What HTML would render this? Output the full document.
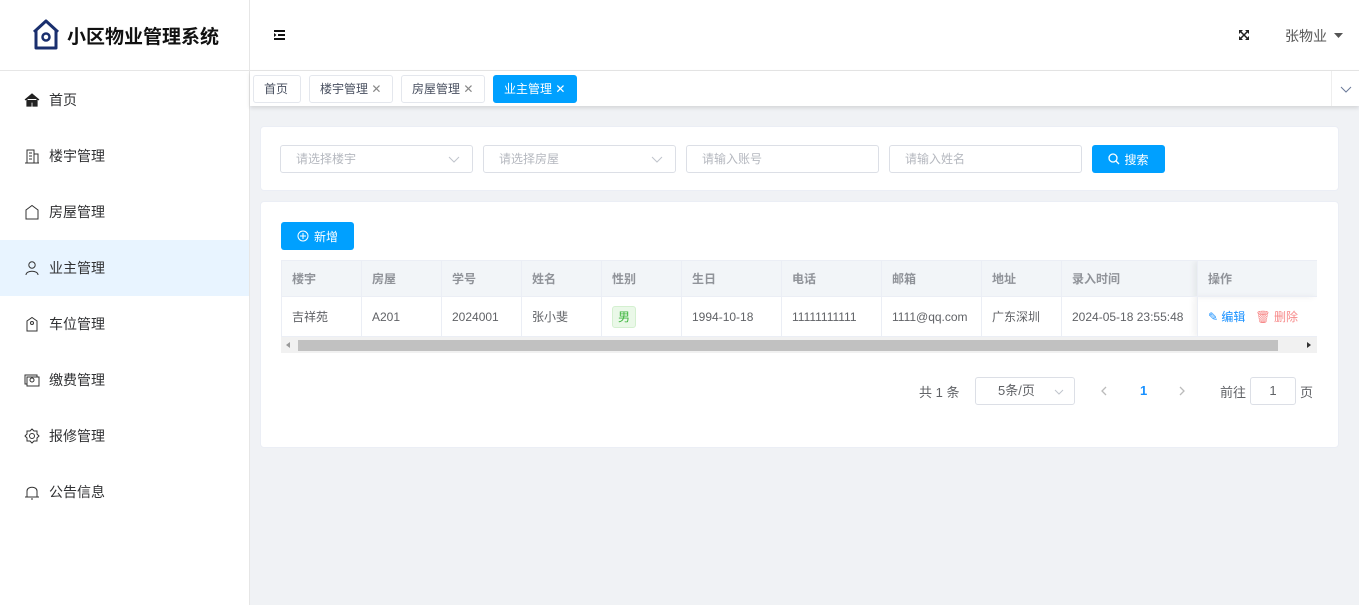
<!DOCTYPE html><html><head><meta charset="utf-8"><style>
*{box-sizing:border-box;margin:0;padding:0}
body{width:1359px;height:605px;overflow:hidden;background:#f0f2f5;font-family:"Liberation Sans","Noto Sans CJK SC",sans-serif;font-size:13px;color:#606266;position:relative}
.abs{position:absolute}
.side{left:0;top:0;width:250px;height:605px;background:#fff;border-right:1px solid #e6e6e6}
.logo{left:0;top:0;width:249px;height:71px;border-bottom:1px solid #e6e6e6;display:flex;align-items:center;justify-content:center;font-size:19px;font-weight:bold;color:#111}
.mi{left:0;width:249px;height:56px;display:flex;align-items:center;padding-left:24px;font-size:14px;color:#303133}
.mi svg{margin-right:9px}
.hdr{left:250px;top:0;width:1109px;height:71px;background:#fff;border-bottom:1px solid #e6e6e6}
.tabs{left:250px;top:71px;width:1109px;height:35px;background:#fff;box-shadow:0 2px 4px rgba(0,0,0,.12)}
.tab{position:absolute;top:4px;height:28px;border:1px solid #e4e7ed;border-radius:3px;font-size:12px;color:#495060;line-height:26px;padding:0 10px;background:#fff;white-space:nowrap}
.card{background:#fff;border:1px solid #ebeef5;border-radius:4px}
.inp{position:absolute;top:18px;height:28px;border:1px solid #dcdfe6;border-radius:3px;font-size:12px;color:#b5b8bf;line-height:26px;padding-left:15px}
.btn{background:#00a0ff;color:#fff;border-radius:3px;font-size:12px;display:flex;align-items:center;justify-content:center}
table{border-collapse:collapse;table-layout:fixed;font-size:12px}
td,th{border:1px solid #ebeef5;text-align:left;padding-left:10px;font-weight:normal}
th{height:36px;background:#f2f5f8;color:#909399;font-weight:bold}
td{height:40px;color:#606266}
</style></head><body>
<div class="abs side"></div>
<div class="abs logo"><svg width="32" height="34" viewBox="0 0 30 34" style="margin-right:5px"><path d="M3 14 L15 3 L27 14 M5 13 V30 H25 V13" fill="none" stroke="#1a2f6e" stroke-width="3" stroke-linejoin="round"/><circle cx="15" cy="19" r="3.5" fill="none" stroke="#1a2f6e" stroke-width="2.5"/></svg>小区物业管理系统</div>
<div class="abs mi" style="top:72px"><svg width="16" height="14" viewBox="0 0 16 14"><path d="M1 7 L8 1 L15 7 M3 6 V13 H7 V9 H9 V13 H13 V6" fill="#222" stroke="#222" stroke-width="1.2"/></svg>首页</div>
<div class="abs mi" style="top:128px"><svg width="16" height="16" viewBox="0 0 16 16" fill="none" stroke="#333"><path d="M1 15 H15 M3 15 V2 H10 V15 M10 6 H14 V15 M5 5 H8 M5 8 H8 M5 11 H8"/></svg>楼宇管理</div>
<div class="abs mi" style="top:184px"><svg width="16" height="16" viewBox="0 0 16 16" fill="none" stroke="#333"><path d="M2 15 V6 L8 1.5 L14 6 V15 Z"/></svg>房屋管理</div>
<div class="abs mi" style="top:240px;background:#e8f4ff"><svg width="16" height="16" viewBox="0 0 16 16" fill="none" stroke="#333"><circle cx="8" cy="5" r="3.2"/><path d="M2 15 C2 10 14 10 14 15"/></svg>业主管理</div>
<div class="abs mi" style="top:296px"><svg width="16" height="16" viewBox="0 0 16 16" fill="none" stroke="#333"><path d="M3 15 V5 L8 1.5 L13 5 V15 Z"/><circle cx="8" cy="7" r="1.5"/></svg>车位管理</div>
<div class="abs mi" style="top:352px"><svg width="16" height="16" viewBox="0 0 16 16" fill="none" stroke="#333"><rect x="1" y="3" width="12" height="9"/><rect x="3" y="5" width="12" height="9" fill="#fff"/><circle cx="8" cy="8" r="2"/></svg>缴费管理</div>
<div class="abs mi" style="top:408px"><svg width="16" height="16" viewBox="0 0 16 16" fill="none" stroke="#333"><circle cx="8" cy="8" r="2.5"/><path d="M8 1 L10 3 L13 3 L13 6 L15 8 L13 10 L13 13 L10 13 L8 15 L6 13 L3 13 L3 10 L1 8 L3 6 L3 3 L6 3 Z"/></svg>报修管理</div>
<div class="abs mi" style="top:464px"><svg width="16" height="16" viewBox="0 0 16 16" fill="none" stroke="#333"><path d="M3 13 V7 C3 2 13 2 13 7 V13 M1 13 H15 M7 15 H9"/></svg>公告信息</div>

<div class="abs hdr"></div>
<svg class="abs" style="left:273px;top:29px" width="13" height="12" viewBox="0 0 13 12"><path d="M1 2 H12 M5 6 H12 M1 10 H12" stroke="#111" stroke-width="2"/><path d="M1 4 L3.5 6 L1 8Z" fill="#111"/></svg>
<svg class="abs" style="left:1238px;top:29px" width="12" height="12" viewBox="0 0 12 12"><path d="M2 2 L10 10 M10 2 L2 10" stroke="#222" stroke-width="1.5"/><path d="M1 1h4L1 5zM11 1h-4l4 4zM1 11h4l-4-4zM11 11h-4l4-4z" fill="#222"/></svg>
<div class="abs" style="left:1285px;top:26px;font-size:14px;color:#555">张物业</div>
<svg class="abs" style="left:1334px;top:33px" width="9" height="5"><path d="M0 0H9L4.5 5Z" fill="#555"/></svg>

<div class="abs tabs">
<div class="tab" style="left:3px;width:48px">首页</div>
<div class="tab" style="left:59px;width:84px">楼宇管理 <span style="color:#888">✕</span></div>
<div class="tab" style="left:151px;width:84px">房屋管理 <span style="color:#888">✕</span></div>
<div class="tab" style="left:243px;width:84px;background:#00a0ff;border-color:#00a0ff;color:#fff">业主管理 ✕</div>
<div style="position:absolute;left:1081px;top:0;width:28px;height:35px;border-left:1px solid #eee;color:#888;text-align:center;line-height:35px"><svg width="12" height="7"><path d="M1 1 L6 6 L11 1" fill="none" stroke="#6b7a99"/></svg></div>
</div>

<div class="abs card" style="left:260px;top:126px;width:1079px;height:65px">
<div class="inp" style="left:19px;width:193px">请选择楼宇<svg style="position:absolute;right:12px;top:10px" width="12" height="7"><path d="M1 1 L6 6 L11 1" fill="none" stroke="#c0c4cc"/></svg></div>
<div class="inp" style="left:222px;width:193px">请选择房屋<svg style="position:absolute;right:12px;top:10px" width="12" height="7"><path d="M1 1 L6 6 L11 1" fill="none" stroke="#c0c4cc"/></svg></div>
<div class="inp" style="left:425px;width:193px">请输入账号</div>
<div class="inp" style="left:628px;width:193px">请输入姓名</div>
<div class="btn abs" style="left:831px;top:18px;width:73px;height:28px"><svg width="12" height="12" style="margin-right:4px"><circle cx="5" cy="5" r="4" fill="none" stroke="#fff" stroke-width="1.3"/><path d="M8 8 L11 11" stroke="#fff" stroke-width="1.3"/></svg>搜索</div>
</div>

<div class="abs card" style="left:260px;top:201px;width:1079px;height:247px">
<div class="btn abs" style="left:20px;top:20px;width:73px;height:28px"><svg width="12" height="12" style="margin-right:5px"><circle cx="6" cy="6" r="5" fill="none" stroke="#fff"/><path d="M6 3V9M3 6H9" stroke="#fff"/></svg>新增</div>
<div class="abs" style="left:20px;top:58px;width:1036px;overflow:hidden">
<table style="width:1036px">
<colgroup><col width="80"><col width="80"><col width="80"><col width="80"><col width="80"><col width="100"><col width="100"><col width="100"><col width="80"><col width="136"><col width="120"></colgroup>
<tr><th>楼宇</th><th>房屋</th><th>学号</th><th>姓名</th><th>性别</th><th>生日</th><th>电话</th><th>邮箱</th><th>地址</th><th>录入时间</th><th style="box-shadow:-4px 0 6px rgba(0,0,0,.06)">操作</th></tr>
<tr><td>吉祥苑</td><td>A201</td><td>2024001</td><td>张小斐</td><td><span style="display:inline-block;border:1px solid #d4f0d0;background:#eaf8e8;color:#3bb53b;border-radius:3px;padding:0 5px;line-height:20px">男</span></td><td>1994-10-18</td><td>11111111111</td><td>1111@qq.com</td><td>广东深圳</td><td>2024-05-18 23:55:48</td><td style="box-shadow:-4px 0 6px rgba(0,0,0,.06)"><span style="color:#1890ff">✎ 编辑</span>&nbsp;&nbsp;&nbsp;<span style="color:#f78989">🗑 删除</span></td></tr>
</table>
<div style="height:16px;background:#f1f1f1;position:relative"><div style="position:absolute;left:17px;top:3px;width:980px;height:11px;background:#c1c1c1"></div><svg style="position:absolute;left:5px;top:5px" width="4" height="6"><path d="M4 0V6L0 3Z" fill="#999"/></svg><svg style="position:absolute;right:6px;top:5px" width="4" height="6"><path d="M0 0V6L4 3Z" fill="#333"/></svg></div>
</div>
<div class="abs" style="left:658px;top:180px;font-size:13px;color:#606266">共 1 条</div>
<div class="abs" style="left:714px;top:175px;width:100px;height:28px;border:1px solid #dcdfe6;border-radius:3px;line-height:26px;padding-left:22px;font-size:13px">5条/页<svg style="position:absolute;right:10px;top:11px" width="10" height="6"><path d="M1 1 L5 5 L9 1" fill="none" stroke="#c0c4cc"/></svg></div>
<svg class="abs" style="left:840px;top:184px" width="6" height="10"><path d="M5 1 L1 5 L5 9" fill="none" stroke="#bbb" stroke-width="1.3"/></svg>
<div class="abs" style="left:879px;top:181px;color:#1890ff;font-weight:bold">1</div>
<svg class="abs" style="left:918px;top:184px" width="6" height="10"><path d="M1 1 L5 5 L1 9" fill="none" stroke="#bbb" stroke-width="1.3"/></svg>
<div class="abs" style="left:959px;top:180px">前往</div>
<div class="abs" style="left:989px;top:175px;width:46px;height:28px;border:1px solid #dcdfe6;border-radius:3px;text-align:center;line-height:26px">1</div>
<div class="abs" style="left:1039px;top:180px">页</div>
</div>
</body></html>
